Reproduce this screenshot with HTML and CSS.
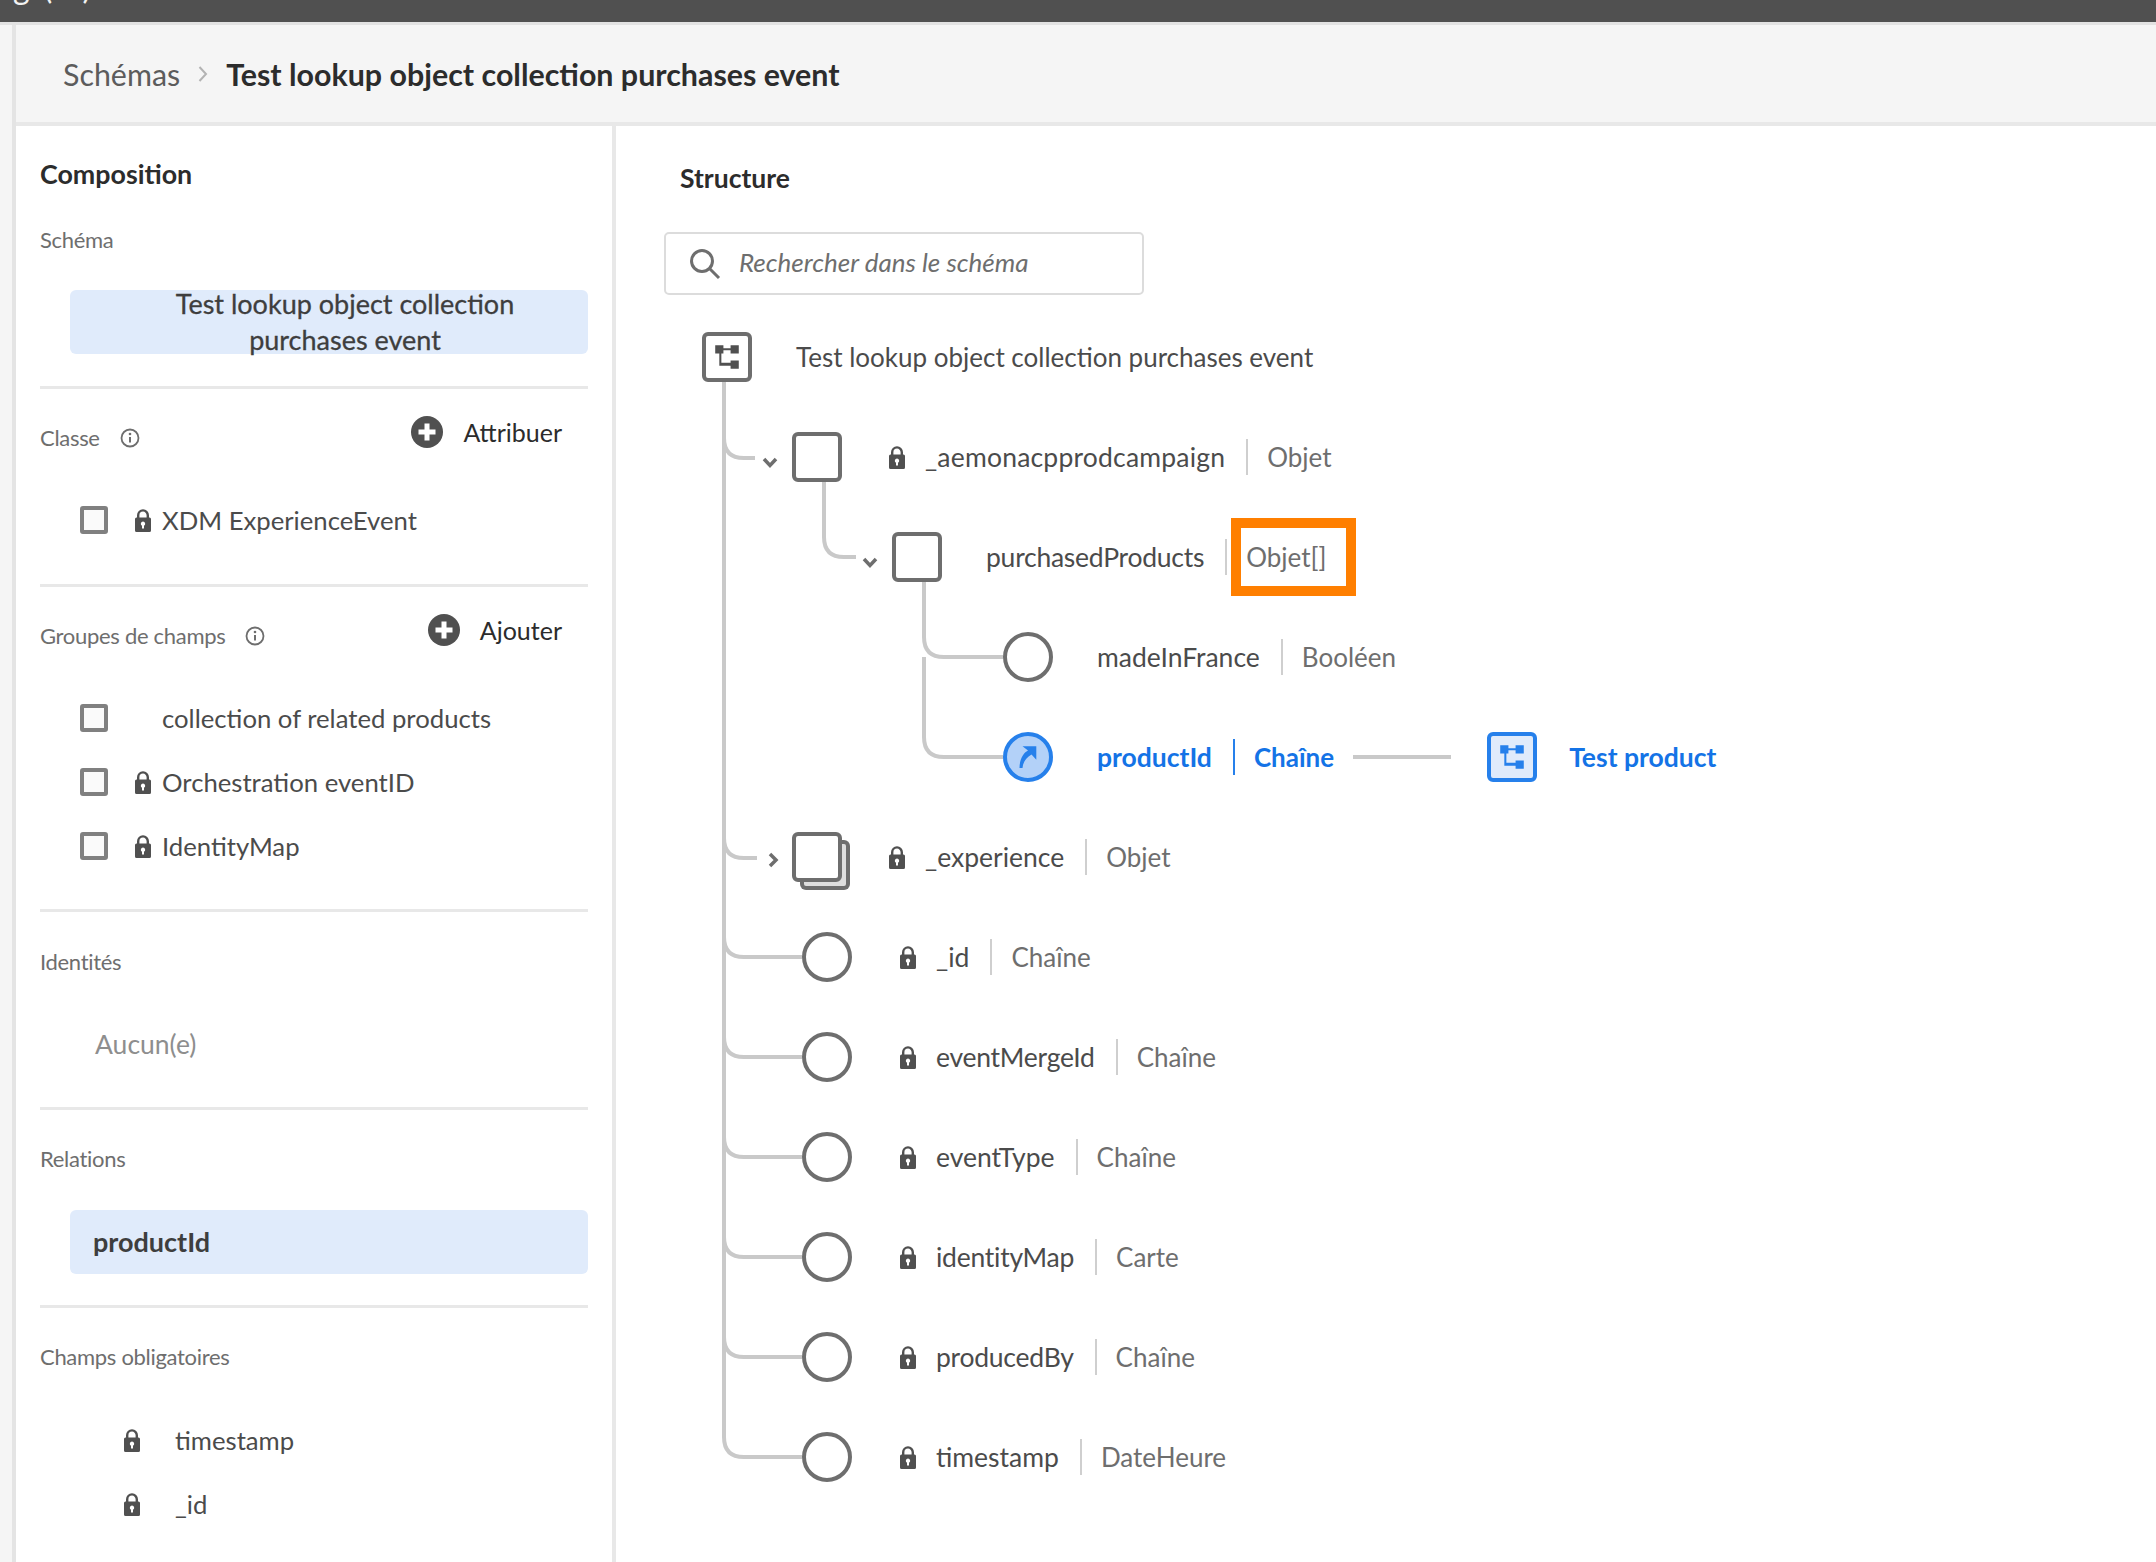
FILE: index.html
```html
<!DOCTYPE html>
<html lang="en">
<head>
    <meta charset="UTF-8">
    <title>Schémas - Test lookup object collection purchases event</title>
    <link rel="stylesheet" href="styles.css">
</head>
<body>
    <!-- shared icons -->
    <svg class="defs" width="0" height="0">
        <symbol id="lock" viewBox="0 0 16 23">
            <path d="M3.2 9V6.2a4.8 4.8 0 0 1 9.6 0V9" fill="none" stroke="currentColor" stroke-width="2.4"/>
            <path fill-rule="evenodd" fill="currentColor" d="M1.5 8.5h13A1.5 1.5 0 0 1 16 10v11.500a1.500 1.500 0 0 1-1.500 1.500h-13A1.500 1.500 0 0 1 0 21.500V10a1.500 1.500 0 0 1 1.500-1.500zM8 12.500a2.200 2.200 0 0 0-1 4.150V19.500h2v-2.850a2.200 2.200 0 0 0-1-4.150z"/>
        </symbol>
        <symbol id="schema" viewBox="4 4 41 41">
            <path fill="currentColor" d="M13 13h8v3h7v-3h8v8h-8v-3h-7v3h-2v9h9v-2h8v8h-8v-3h-11V21h-4z"/>
        </symbol>
        <symbol id="plus" viewBox="0 0 32 32">
            <circle cx="16" cy="16" r="16" fill="currentColor"/>
            <path d="M16 7.500v17M7.500 16h17" stroke="#fff" stroke-width="5" fill="none"/>
        </symbol>
        <symbol id="info" viewBox="0 0 20 20">
            <circle cx="10" cy="10" r="8.500" fill="none" stroke="currentColor" stroke-width="1.800"/>
            <path d="M10 9v5.500" stroke="currentColor" stroke-width="2" fill="none"/>
            <circle cx="10" cy="6" r="1.300" fill="currentColor"/>
        </symbol>
    </svg>

    <div class="topbar"><span class="topbar-text">g (…)</span></div>

    <div class="shell">
        <div class="rail"></div>
        <div class="main">
            <header class="header">
                <span class="crumb">Schémas</span>
                <svg class="crumb-sep" width="10" height="18" viewBox="0 0 10 18"><path d="M1.500 2l6.500 7-6.500 7" fill="none" stroke="#b3b3b3" stroke-width="2"/></svg>
                <span class="crumb-current">Test lookup object collection purchases event</span>
            </header>

            <div class="content">
                <aside class="composition">
                    <section class="panel-section section-schema">
                        <h2 class="panel-title">Composition</h2>
                        <div class="label label-schema">Schéma</div>
                        <div class="chip chip-center"><span>Test lookup object collection<br>purchases event</span></div>
                    </section>

                    <section class="panel-section section-class">
                        <div class="section-head">
                            <div class="label">Classe <svg class="info"><use href="#info"/></svg></div>
                            <div class="action"><svg class="plus"><use href="#plus"/></svg>Attribuer</div>
                        </div>
                        <ul class="checks">
                            <li><span class="check"></span><svg class="lock"><use href="#lock"/></svg>XDM ExperienceEvent</li>
                        </ul>
                    </section>

                    <section class="panel-section section-groups">
                        <div class="section-head">
                            <div class="label">Groupes de champs <svg class="info"><use href="#info"/></svg></div>
                            <div class="action"><svg class="plus"><use href="#plus"/></svg>Ajouter</div>
                        </div>
                        <ul class="checks">
                            <li><span class="check"></span><span class="lock-gap"></span>collection of related products</li>
                            <li><span class="check"></span><svg class="lock"><use href="#lock"/></svg>Orchestration eventID</li>
                            <li><span class="check"></span><svg class="lock"><use href="#lock"/></svg>IdentityMap</li>
                        </ul>
                    </section>

                    <section class="panel-section section-ident">
                        <div class="label">Identités</div>
                        <div class="none">Aucun(e)</div>
                    </section>

                    <section class="panel-section section-rel">
                        <div class="label">Relations</div>
                        <div class="chip chip-left">productId</div>
                    </section>

                    <section class="panel-section section-required">
                        <div class="label">Champs obligatoires</div>
                        <ul class="required">
                            <li><svg class="lock"><use href="#lock"/></svg>timestamp</li>
                            <li><svg class="lock"><use href="#lock"/></svg>_id</li>
                        </ul>
                    </section>
                </aside>

                <main class="structure">
                    <h2 class="structure-title">Structure</h2>
                    <div class="search">
                        <svg class="search-icon" width="32" height="32" viewBox="0 0 32 32"><circle cx="13" cy="13" r="10.500" fill="none" stroke="#6e6e6e" stroke-width="3"/><path d="M20.500 20.500L30 30" stroke="#6e6e6e" stroke-width="3" fill="none"/></svg>
                        <span class="search-text">Rechercher dans le schéma</span>
                    </div>

                    <div class="tree">
                        <!-- connector lines and expand arrows -->
                        <svg class="links" width="800" height="1200" viewBox="0 0 800 1200">
                            <g fill="none" stroke="#c9c9c9" stroke-width="4">
                                <path d="M60 75V1130q0 20 20 20H138"/>
                                <path d="M60 131q0 20 20 20H91"/>
                                <path d="M60 531q0 20 20 20H93"/>
                                <path d="M60 630q0 20 20 20H138"/>
                                <path d="M60 730q0 20 20 20H138"/>
                                <path d="M60 830q0 20 20 20H138"/>
                                <path d="M60 930q0 20 20 20H138"/>
                                <path d="M60 1030q0 20 20 20H138"/>
                                <path d="M160 175V230q0 20 20 20H192"/>
                                <path d="M260 275V330q0 20 20 20H339"/>
                                <path d="M260 350V430q0 20 20 20H339"/>
                            </g>
                            <g fill="none" stroke="#6e6e6e" stroke-width="3.500">
                                <path d="M100 152l6 6.500 6-6.500"/>
                                <path d="M200 252l6 6.500 6-6.500"/>
                                <path d="M106 547l6 6-6 6"/>
                            </g>
                        </svg>

                        <div class="row lvl-root">
                            <span class="node square"><svg class="schema"><use href="#schema"/></svg></span>
                            <span class="name name-root">Test lookup object collection purchases event</span>
                        </div>
                        <div class="row lvl-1">
                            <span class="node square"></span>
                            <svg class="lock"><use href="#lock"/></svg>
                            <span class="name wide">_aemonacpprodcampaign</span><span class="sep"></span><span class="type">Objet</span>
                        </div>
                        <div class="row lvl-2">
                            <span class="node square"></span>
                            <span class="name tight">purchasedProducts</span><span class="sep"></span><span class="type marked">Objet[]</span>
                        </div>
                        <div class="row lvl-3">
                            <span class="node circle"></span>
                            <span class="name">madeInFrance</span><span class="sep"></span><span class="type">Booléen</span>
                        </div>
                        <div class="row lvl-3 linked">
                            <span class="node circle">
                                <svg width="42" height="42" viewBox="0 0 42 42"><path fill="#2680eb" d="M15.500 10.300H29.300V23.700L24.500 18.500C19 22 16 26 15.500 32H12.500C12.500 24 16 17 21 14.500Z"/></svg>
                            </span>
                            <span class="name">productId</span><span class="sep"></span><span class="type">Chaîne</span>
                            <span class="relation-line"></span>
                            <span class="node square target"><svg class="schema"><use href="#schema"/></svg></span>
                            <span class="name">Test product</span>
                        </div>
                        <div class="row lvl-1">
                            <span class="node square stacked"></span>
                            <svg class="lock"><use href="#lock"/></svg>
                            <span class="name">_experience</span><span class="sep"></span><span class="type">Objet</span>
                        </div>
                        <div class="row lvl-1c">
                            <span class="node circle"></span>
                            <svg class="lock"><use href="#lock"/></svg>
                            <span class="name">_id</span><span class="sep"></span><span class="type">Chaîne</span>
                        </div>
                        <div class="row lvl-1c">
                            <span class="node circle"></span>
                            <svg class="lock"><use href="#lock"/></svg>
                            <span class="name tight">eventMergeId</span><span class="sep"></span><span class="type">Chaîne</span>
                        </div>
                        <div class="row lvl-1c">
                            <span class="node circle"></span>
                            <svg class="lock"><use href="#lock"/></svg>
                            <span class="name">eventType</span><span class="sep"></span><span class="type">Chaîne</span>
                        </div>
                        <div class="row lvl-1c">
                            <span class="node circle"></span>
                            <svg class="lock"><use href="#lock"/></svg>
                            <span class="name tight">identityMap</span><span class="sep"></span><span class="type">Carte</span>
                        </div>
                        <div class="row lvl-1c">
                            <span class="node circle"></span>
                            <svg class="lock"><use href="#lock"/></svg>
                            <span class="name tight">producedBy</span><span class="sep"></span><span class="type">Chaîne</span>
                        </div>
                        <div class="row lvl-1c">
                            <span class="node circle"></span>
                            <svg class="lock"><use href="#lock"/></svg>
                            <span class="name">timestamp</span><span class="sep"></span><span class="type">DateHeure</span>
                        </div>
                    </div>
                </main>
            </div>
        </div>
    </div>
</body>
</html>
```

FILE: styles.css
```css
* {
    margin: 0;
    padding: 0;
    box-sizing: border-box;
}

body {
    font-family: Lato, "Open Sans", sans-serif;
    height: 100vh;
    overflow: hidden;
    background: #fff;
    color: #4b4b4b;
    display: flex;
    flex-direction: column;
}

ul {
    list-style: none;
}

.defs {
    position: absolute;
}

/* Top dark strip, text cut off by the edge */
.topbar {
    height: 25px;
    flex: none;
    background: #505050;
    border-bottom: 3px solid #e2e2e2;
    overflow: hidden;
    padding-left: 13px;
}

.topbar-text {
    display: block;
    color: #f2f2f2;
    font-size: 32px;
    line-height: 32px;
    margin-top: -29px;
    letter-spacing: 3px;
}

.shell {
    flex: 1;
    display: flex;
    min-height: 0;
}

.rail {
    width: 16px;
    flex: none;
    background: #f5f5f5;
    border-right: 4px solid #e4e4e4;
}

.main {
    flex: 1;
    display: flex;
    flex-direction: column;
    min-width: 0;
}

/* Breadcrumb */
.header {
    height: 101px;
    flex: none;
    background: #f5f5f5;
    border-bottom: 4px solid #e8e8e8;
    display: flex;
    align-items: center;
    padding-left: 47px;
}

.crumb {
    font-size: 30.4px;
    color: #5c5c5c;
}

.crumb-sep {
    margin: 0 18px 0 18px;
}

.crumb-current {
    font-size: 30.4px;
    font-weight: 700;
    color: #2c2c2c;
}

.content {
    flex: 1;
    display: flex;
    min-height: 0;
}

/* Left column */
.composition {
    width: 600px;
    flex: none;
    padding: 0 24px;
    border-right: 4px solid #e8e8e8;
}

.panel-section {
    border-bottom: 3px solid #e8e8e8;
}

.panel-section:last-child {
    border-bottom: none;
}

.panel-title {
    font-size: 26.8px;
    line-height: 36px;
    font-weight: 700;
    color: #2c2c2c;
}

.label {
    font-size: 22px;
    line-height: 30px;
    color: #6e6e6e;
    letter-spacing: -0.3px;
    display: flex;
    align-items: center;
}

.info {
    width: 20px;
    height: 20px;
    margin-left: 20px;
    color: #6e6e6e;
}

.section-schema {
    padding: 30px 0 32px;
    height: 263px;
}

.label-schema {
    margin: 33px 0 35px;
}

.chip {
    margin-left: 30px;
    background: #e0ebfb;
    border-radius: 6px;
    color: #3e3e3e;
    font-size: 27px;
}

.chip-center {
    height: 64px;
    line-height: 36px;
    text-align: center;
    padding-left: 32px;
    display: flex;
    align-items: center;
    justify-content: center;
    -webkit-text-stroke: 0.3px #3e3e3e;
}

.chip-left {
    height: 64px;
    line-height: 64px;
    padding-left: 23px;
    font-weight: 700;
}

.section-head {
    display: flex;
    justify-content: space-between;
    align-items: flex-start;
}

.section-head .label {
    margin-top: 7px;
}

.action {
    display: flex;
    align-items: center;
    height: 32px;
    font-size: 25px;
    color: #2c2c2c;
    margin-right: 26px;
}

.plus {
    width: 32px;
    height: 32px;
    margin-right: 20px;
    color: #505050;
}

.section-class {
    padding-top: 27px;
    height: 198px;
}

.section-groups {
    padding-top: 27px;
    height: 325px;
}

.checks {
    margin-top: 47px;
    display: flex;
    flex-direction: column;
    gap: 24px;
}

.checks li {
    display: flex;
    align-items: center;
    height: 40px;
    font-size: 25.7px;
    color: #4b4b4b;
}

.check {
    width: 28px;
    height: 28px;
    margin: 0 27px 0 40px;
    border: 4px solid #808080;
    border-radius: 3px;
    background: #fafafa;
}

.lock {
    width: 16px;
    height: 23px;
    flex: none;
    color: #505050;
}

.checks .lock {
    margin-right: 11px;
}

.lock-gap {
    width: 27px;
}

.section-ident {
    padding-top: 35px;
    height: 198px;
}

.none {
    margin: 49px 0 0 55px;
    font-size: 26.5px;
    line-height: 36px;
    color: #8e8e8e;
}

.section-rel {
    padding-top: 34px;
    height: 198px;
}

.section-rel .chip {
    margin-top: 36px;
}

.section-required {
    padding-top: 34px;
}

.required {
    margin-top: 48px;
    display: flex;
    flex-direction: column;
    gap: 24px;
}

.required li {
    display: flex;
    align-items: center;
    height: 40px;
    font-size: 25.7px;
    padding-left: 84px;
}

.required .lock {
    margin-right: 35px;
}

/* Structure */
.structure {
    flex: 1;
    padding: 34px 0 0 48px;
    min-width: 0;
}

.structure-title {
    font-size: 26.5px;
    line-height: 36px;
    font-weight: 700;
    color: #2c2c2c;
    margin-left: 16px;
}

.search {
    width: 480px;
    height: 63px;
    margin: 36px 0 0 0;
    border: 2px solid #dcdcdc;
    border-radius: 5px;
    display: flex;
    align-items: center;
    padding-left: 23px;
}

.search-text {
    margin-left: 18px;
    padding-bottom: 4px;
    font-size: 26px;
    font-style: italic;
    color: #6e6e6e;
}

.tree {
    position: relative;
    margin-top: 12px;
}

.links {
    position: absolute;
    left: 0;
    top: 0;
}

.row {
    position: relative;
    height: 100px;
    display: flex;
    align-items: center;
    font-size: 26.5px;
}

.lvl-root { padding-left: 38px; }
.lvl-1 { padding-left: 128px; }
.lvl-2 { padding-left: 228px; }
.lvl-3 { padding-left: 339px; }
.lvl-1c { padding-left: 138px; }

.node {
    position: relative;
    flex: none;
    width: 50px;
    height: 50px;
    margin-right: 44px;
    border: 4px solid #6e6e6e;
    background: #fff;
    color: #505050;
    display: flex;
    align-items: center;
    justify-content: center;
}

.lvl-1c .node {
    margin-right: 45px;
}

.square {
    border-radius: 6px;
}

.circle {
    border-radius: 50%;
}

.schema {
    width: 42px;
    height: 42px;
}

.stacked {
    box-shadow: 8px 8px 0 -4px #dedede, 8px 8px 0 0 #6e6e6e;
}

.row > .lock {
    margin: 0 20px 0 3px;
}

.name {
    color: #4b4b4b;
    white-space: nowrap;
}

.name-root {
    font-size: 26px;
}

.tight {
    letter-spacing: -0.25px;
}

.wide {
    letter-spacing: 0.2px;
}

.sep {
    width: 2px;
    height: 36px;
    margin: 0 19px 0 21px;
    background: #cfcfcf;
}

.type {
    position: relative;
    font-size: 26px;
    color: #6e6e6e;
    white-space: nowrap;
}

.marked::after {
    content: "";
    box-sizing: border-box;
    position: absolute;
    left: -15px;
    top: -23px;
    width: 125px;
    height: 78px;
    border: 10px solid #ff7f00;
}

.linked .name,
.linked .type {
    color: #1473e6;
    font-weight: 700;
}

.linked .sep {
    background: #2680eb;
}

.linked .circle {
    border-color: #2680eb;
    background: #b3d1f8;
}

.relation-line {
    width: 98px;
    height: 4px;
    margin: 0 36px 0 19px;
    background: #c9c9c9;
}

.target {
    margin-right: 32px;
    border-color: #2680eb;
    background: #e0ebfb;
    color: #2680eb;
}
```
